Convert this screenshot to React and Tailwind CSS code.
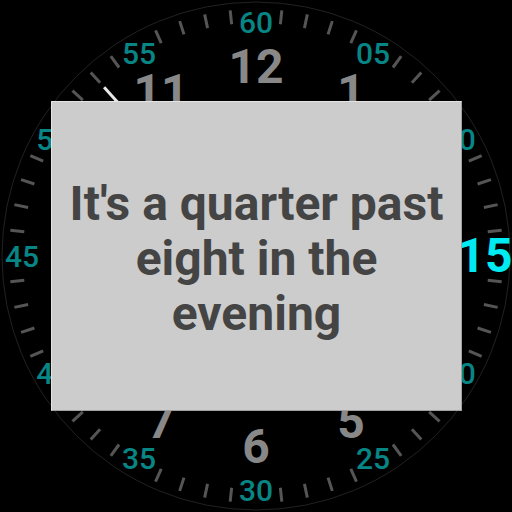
import React from 'react';

const CX = 256;
const CY = 256;

// point on the dial, angle in degrees clockwise from 12 o'clock
function polar(r, deg) {
    const a = (deg * Math.PI) / 180;
    return [CX + r * Math.sin(a), CY - r * Math.cos(a)];
}

function Dial() {
    const ticks = [];
    for (let m = 0; m < 60; m++) {
        if (m % 5 === 0) continue;
        const [x1, y1] = polar(233, m * 6);
        const [x2, y2] = polar(247, m * 6);
        ticks.push(<line key={m} x1={x1} y1={y1} x2={x2} y2={y2} stroke="#555555" strokeWidth="3" />);
    }

    const minutes = [];
    for (let i = 0; i < 12; i++) {
        const label = i === 0 ? '60' : String(i * 5).padStart(2, '0');
        if (label === '15') continue;
        const [x, y] = polar(234, i * 30);
        minutes.push(
            <text key={label} x={x} y={y + 10.5} textAnchor="middle" fontSize="30" fontWeight="500" fill="#088585">
                {label}
            </text>
        );
    }

    const hours = [];
    for (let h = 1; h <= 12; h++) {
        const [x, y] = polar(190, h * 30);
        hours.push(
            <text key={h} x={x} y={y + 17} textAnchor="middle" fontSize="48" fontWeight="700" fill="#888888">
                {h}
            </text>
        );
    }

    const [sx, sy] = polar(227, 318);

    return (
        <svg width="512" height="512" viewBox="0 0 512 512" className="block" style={{ fontFamily: 'Roboto, "Noto Sans", sans-serif' }}>
            <rect width="512" height="512" fill="#000" />
            <circle cx={CX} cy={CY} r="254" fill="none" stroke="#222222" strokeWidth="1" />
            {ticks}
            {minutes}
            <text x="485" y="272" textAnchor="middle" fontSize="48" fontWeight="700" fill="#00eaf2">
                15
            </text>
            {hours}
            <line x1={CX} y1={CY} x2={sx} y2={sy} stroke="#e8e8e8" strokeWidth="3" />
        </svg>
    );
}

export default function App() {
    return (
        <div className="relative w-[512px] h-[512px] bg-black overflow-hidden">
            <Dial />

            {/* Spoken time card */}
            <div className="absolute left-[51px] top-[101px] w-[411px] h-[310px] bg-[#cccccc] border border-t-[#e4e4e4] border-l-[#e4e4e4] border-r-[#a0a0a0] border-b-[#a0a0a0] flex items-center justify-center px-2">
                <p
                    className="text-center text-[48px] leading-[55px] font-bold text-[#444444] pt-[4px]"
                    style={{ fontFamily: 'Roboto, "Noto Sans", sans-serif' }}
                >
                    It's a quarter past eight in the evening
                </p>
            </div>
        </div>
    );
}
